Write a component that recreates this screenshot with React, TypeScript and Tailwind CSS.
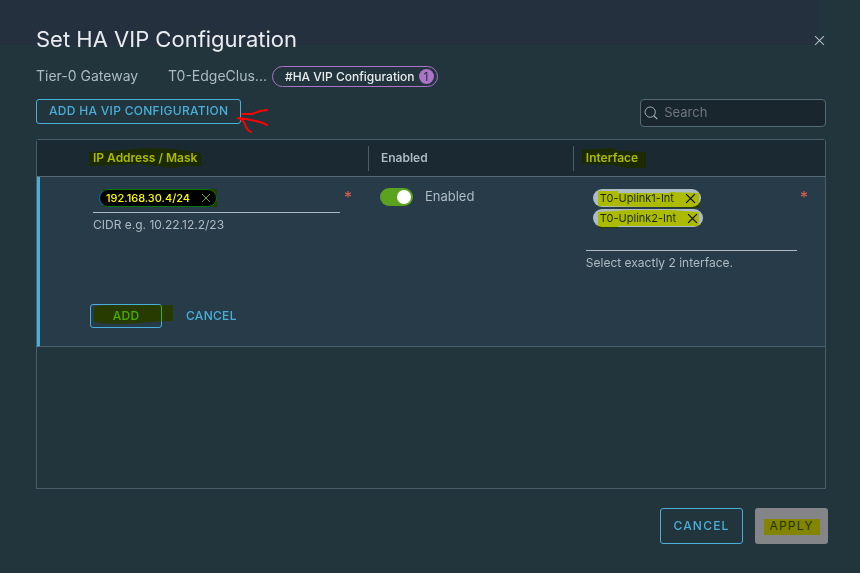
import type { ReactNode } from "react";

const inter = "font-['Inter',sans-serif]";

function Cross({ size, className }: { size: number; className?: string }) {
  return (
    <svg width={size} height={size} viewBox="0 0 10 10" className={className} aria-hidden="true">
      <path d="M1 1L9 9M9 1L1 9" stroke="currentColor" strokeWidth="1" fill="none" />
    </svg>
  );
}

function Marker({ points, className, w, h }: { points: string; className: string; w: number; h: number }) {
  return (
    <svg
      width={w}
      height={h}
      viewBox={`0 0 ${w} ${h}`}
      className={`pointer-events-none absolute mix-blend-multiply ${className}`}
      aria-hidden="true"
    >
      <polygon points={points} fill="#ffff00" />
    </svg>
  );
}

function Chip({ children, label }: { children: ReactNode; label: string }) {
  return (
    <span className="flex h-[18px] w-fit items-center gap-[11px] rounded-full bg-[#adbbc4] pr-[5px] pl-[7px] text-[11px] text-[#1b2a32]">
      {children}
      <button type="button" aria-label={label} className="flex">
        <Cross size={11} className="text-black" />
      </button>
    </span>
  );
}

export default function App() {
  return (
    <div
      className={`${inter} flex min-h-screen flex-col bg-[#22343c] bg-[linear-gradient(#25303f,#25303f)] bg-[length:95%_45px] bg-no-repeat pr-8 pb-[29px] pl-9 text-[#adbbc4]`}
    >
      <header className="flex h-[66px] items-start justify-between pt-[23px]">
        <h1 className="text-[22px] leading-8 text-[#e9ecef]">Set HA VIP Configuration</h1>
        <button type="button" aria-label="Close" className="mt-3 mr-[3px] flex">
          <Cross size={11} />
        </button>
      </header>

      <div className="flex h-[21px] items-center text-sm">
        <span className="w-[132px] pb-[2px]">Tier-0 Gateway</span>
        <span className="w-[104px] pb-[2px]">T0-EdgeClus...</span>
        <span className="flex h-[21px] items-center gap-1 rounded-full border border-[#ad73c8] pr-[3px] pl-3 text-xs font-medium text-[#e9ecef]">
          #HA VIP Configuration
          <span className="flex size-[15px] items-center justify-center rounded-full bg-[#ad73c8] font-normal text-[#22343c]">
            1
          </span>
        </span>
      </div>

      <div className="mt-3 mr-[2px] flex items-start justify-between">
        <div className="relative">
          <button
            type="button"
            className="flex h-[25px] items-center rounded-[3px] border border-[#49afd9] px-3 pb-[2px] text-xs font-medium tracking-wide text-[#49afd9]"
          >
            ADD HA VIP CONFIGURATION
          </button>
          <svg width="34" height="26" viewBox="0 0 34 26" className="absolute top-[9px] left-[200px]" aria-hidden="true">
            <path
              d="M6 6L16 6L24 3L31 2M2 10L10 11L20 13L27 15L31 17M3 10L8 14L10 19L12 22L15 24"
              stroke="#fe0000"
              strokeWidth="2"
              fill="none"
              strokeLinecap="round"
            />
          </svg>
        </div>
        <label className="flex h-7 w-[186px] items-center gap-[6px] rounded-[4px] border border-[#566a75] bg-[#1a262e] px-[3px]">
          <svg width="16" height="16" viewBox="0 0 16 16" fill="none" stroke="currentColor" aria-hidden="true">
            <circle cx="7" cy="7" r="5.8" />
            <path d="M11 11L15 15" strokeWidth="1.3" />
          </svg>
          <input
            type="search"
            aria-label="Search"
            placeholder="Search"
            className="w-full min-w-0 bg-transparent text-[13px] outline-none placeholder:text-[#6d767f]"
          />
        </label>
      </div>

      <main className="mt-3 mr-[2px] flex-1 rounded-t-[3px] border border-[#4b5f6a]">
        <table className="w-full table-fixed border-separate border-spacing-0 text-left text-xs">
          <thead className="bg-[#1b2a32]">
            <tr className="h-[37px]">
              <th className="w-[42%] border-b border-[#566a75] p-0 pl-14 font-semibold">
                <span className="relative">
                  IP Address / Mask
                  <Marker
                    w={112}
                    h={20}
                    className="-top-[2px] -left-1"
                    points="0,4 36,2 58,0 84,1 112,5 112,18 96,18 84,20 50,16 0,18"
                  />
                </span>
              </th>
              <th className="w-[26%] border-b border-[#566a75] p-0 font-semibold">
                <span className="flex h-[25px] items-center border-l border-[#4b5f6a] pl-3">Enabled</span>
              </th>
              <th className="border-b border-[#566a75] p-0 font-semibold">
                <span className="flex h-[25px] items-center border-l border-[#4b5f6a] pl-3">
                  <span className="relative">
                    Interface
                    <Marker w={64} h={20} className="-top-[2px] -left-1" points="0,2 32,0 34,3 64,4 64,20 44,20 30,17 0,16" />
                  </span>
                </span>
              </th>
            </tr>
          </thead>
          <tbody className="bg-[#273b48]">
            <tr>
              <td className="border-b border-l-3 border-b-[#4b5f6a] border-l-[#49afd9] p-0 align-top">
                <div className="flex h-[169px] flex-col pl-[53px]">
                  <div className="flex gap-1 pt-3">
                    <div className="flex h-6 flex-1 border-b border-[#adbbc4] pl-[6px]">
                      <span className="relative flex h-[18px] items-center gap-[11px] rounded-full border border-[#0079b8] bg-black pr-[5px] pl-[6px] text-[11px] font-medium text-white">
                        192.168.30.4/24
                        <button type="button" aria-label="Remove 192.168.30.4/24" className="flex text-[#62a420]">
                          <Cross size={10} />
                        </button>
                        <Marker w={114} h={18} className="-top-px left-[3px]" points="0,0 114,0 114,18 0,18" />
                      </span>
                    </div>
                    <span className="w-6 text-base leading-4 text-[#e5604c]">*</span>
                  </div>
                  <span className="mt-1 leading-4">CIDR e.g. 10.22.12.2/23</span>
                  <div className="relative mt-auto -ml-[3px] flex items-center gap-6 pb-[18px] tracking-wide">
                    <button
                      type="button"
                      className="h-6 w-[72px] rounded-[3px] border border-[#49afd9] font-medium text-[#49afd9]"
                    >
                      ADD
                    </button>
                    <button type="button" className="font-medium text-[#49afd9]">
                      CANCEL
                    </button>
                    <Marker w={79} h={19} className="top-px left-1" points="0,2 12,0 79,0 79,16 55,17 36,19 16,19 0,17" />
                  </div>
                </div>
              </td>
              <td className="border-b border-[#4b5f6a] p-0 align-top">
                <label className="flex items-center gap-3 pt-[9px] pl-3 text-[13px] leading-5">
                  <input type="checkbox" defaultChecked className="peer sr-only" />
                  <span className="flex h-[18px] w-[33px] items-center justify-end rounded-full bg-[#5aa220] px-[2px]">
                    <span className="size-[14px] rounded-full bg-white" />
                  </span>
                  <span className="pb-[2px]">Enabled</span>
                </label>
              </td>
              <td className="border-b border-[#4b5f6a] p-0 align-top">
                <div className="flex pt-3 pl-[13px]">
                  <div className="flex-1">
                    <div className="relative flex h-[62px] flex-col gap-[2px] border-b border-[#adbbc4] pl-[7px]">
                      <Chip label="Remove T0-Uplink1-Int">T0-Uplink1-Int</Chip>
                      <Chip label="Remove T0-Uplink2-Int">T0-Uplink2-Int</Chip>
                      <Marker
                        w={102}
                        h={18}
                        className="top-px left-3"
                        points="0,1 20,1 20,3 72,3 72,2 101,3 101,18 0,16"
                      />
                      <Marker
                        w={102}
                        h={20}
                        className="top-[19px] left-3"
                        points="0,4 32,2 70,2 101,4 101,18 20,18 20,20 0,20"
                      />
                    </div>
                    <span className="mt-1 block leading-4">Select exactly 2 interface.</span>
                  </div>
                  <span className="w-7 pl-[3px] text-base leading-4 text-[#e5604c]">*</span>
                </div>
              </td>
            </tr>
          </tbody>
        </table>
      </main>

      <footer className="mt-[19px] flex justify-end gap-3">
        <button
          type="button"
          className="h-9 w-[83px] rounded-[3px] border border-[#49afd9] text-xs font-medium tracking-widest text-[#49afd9]"
        >
          CANCEL
        </button>
        <button type="button" className="relative h-9 w-[73px] rounded-[3px] bg-[#838589] text-xs tracking-widest text-[#22343c]">
          APPLY
          <Marker w={56} h={16} className="top-[11px] left-[9px]" points="0,0 56,0 56,16 0,16" />
        </button>
      </footer>
    </div>
  );
}
